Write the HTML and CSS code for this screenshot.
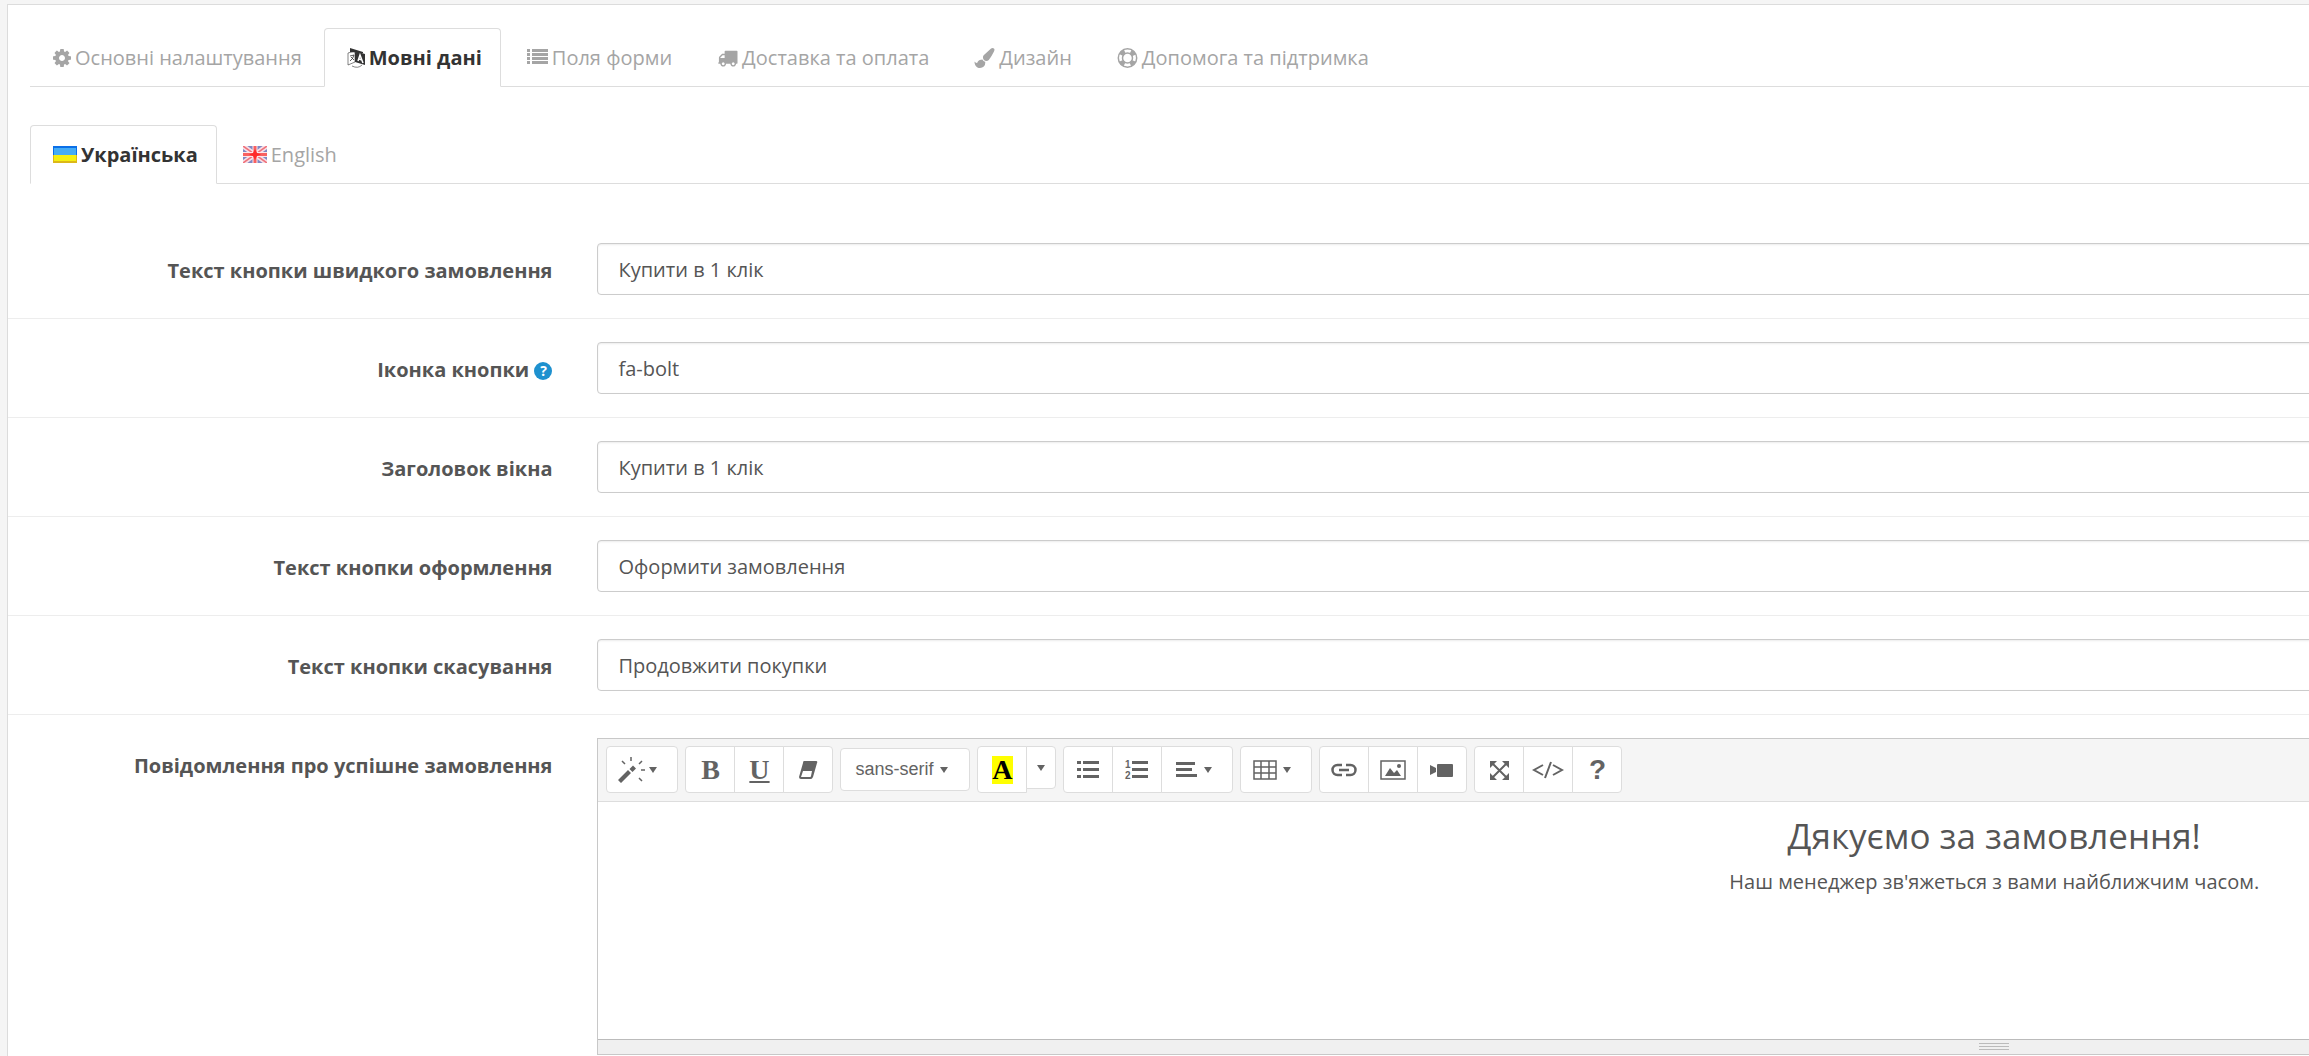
FILE: index.html
```html
<!DOCTYPE html>
<html lang="uk">
<head>
  <meta charset="UTF-8">
  <meta name="viewport" content="width=device-width, initial-scale=1.0">
  <title>Швидке замовлення</title>
  <link rel="stylesheet" href="styles.css">
</head>
<body>
  <main class="panel">
    <!-- Вкладки модуля -->
    <nav class="tabs">
      <a class="tab" href="#general">
        <svg class="icon" viewBox="128 80 1536 1632"><path d="M1152 896q0-106-75-181t-181-75-181 75-75 181 75 181 181 75 181-75 75-181zm512-109v222q0 12-8 23t-20 13l-185 28q-19 54-39 91 35 50 107 138 10 12 10 25t-9 23q-27 37-99 108t-94 71q-12 0-26-9l-138-108q-44 23-91 38-16 136-29 186-7 28-36 28h-222q-14 0-24.500-8.500t-11.500-21.500l-28-184q-49-16-90-37l-141 107q-10 9-25 9-14 0-25-11-126-114-165-168-7-10-7-23 0-12 8-23 15-21 51-66.500t54-70.500q-27-50-41-99l-183-27q-13-2-21-12.500t-8-23.500v-222q0-12 8-23t19-13l186-28q14-46 39-92-40-57-107-138-10-12-10-24 0-10 9-23 26-36 98.500-107.500t94.500-71.500q13 0 26 10l138 107q44-23 91-38 16-136 29-186 7-28 36-28h222q14 0 24.500 8.500t11.500 21.500l28 184q49 16 90 37l142-107q9-9 24-9 13 0 25 10 129 119 165 170 7 8 7 22 0 12-8 23-15 21-51 66.500t-54 70.500q26 50 41 98l183 28q13 2 21 12.500t8 23.500z"/></svg>
        Основні налаштування
      </a>
      <a class="tab active" href="#language">
        <svg class="icon" viewBox="0 0 18 20"><path d="M8 3l10 3v11L8 14zM3 0l13 4v1L3 4z"/><path d="M1 5l7-2v11l-7 3zM5 18q6 3 10-1" fill="none" stroke="currentColor" stroke-width="0.600"/><path d="M3 8l4-1q-1 4-4 6M4 9l3 3" fill="none" stroke="currentColor" stroke-width="0.800"/><path d="M11 13l2-6 3 8M12 11l3 1" fill="none" stroke="#fff" stroke-width="1.500"/></svg>
        Мовні дані
      </a>
      <a class="tab" href="#fields">
        <svg class="icon wide" viewBox="0 0 21 20"><path d="M0 1h3v3H0zM0 5h3v3H0zM0 9h3v3H0zM0 13h3v3H0zM5 1h16v3H5zM5 5h16v3H5zM5 9h16v3H5zM5 13h16v3H5z"/></svg>
        Поля форми
      </a>
      <a class="tab" href="#delivery">
        <svg class="icon wide" viewBox="0 0 1792 1792"><path d="M640 1408q0-52-38-90t-90-38-90 38-38 90 38 90 90 38 90-38 38-90zm-384-512h384v-256h-158q-13 0-22 9l-195 195q-9 9-9 22v30zm1280 512q0-52-38-90t-90-38-90 38-38 90 38 90 90 38 90-38 38-90zm256-1088v1024q0 15-4 26.500t-13.500 18.500-16.500 11.500-23.500 6-22.500 2-25.500 0-22.500-.5q0 106-75 181t-181 75-181-75-75-181h-384q0 106-75 181t-181 75-181-75-75-181h-64q-3 0-22.500.5t-25.500 0-22.500-2-23.500-6-16.500-11.500-13.500-18.500-4-26.500q0-26 19-45t45-19v-320q0-8-.5-35t0-38 2.500-34.500 6.500-37 14-30.500 22.500-30l198-198q19-19 50.500-32t58.500-13h160v-192q0-26 19-45t45-19h1024q26 0 45 19t19 45z"/></svg>
        Доставка та оплата
      </a>
      <a class="tab" href="#design">
        <svg class="icon wide" viewBox="0 0 1792 1792"><path d="M1615 0q70 0 122.500 46.500t52.500 116.500q0 63-45 151-332 629-465 752-97 91-218 91-126 0-216.500-92.500t-90.500-219.500q0-128 92-212l638-579q59-54 130-54zm-909 1034q39 76 106.500 130t150.500 76l1 71q4 213-129.500 347t-348.500 134q-123 0-218-46.500t-152.500-127.500-86.500-183-29-220q7 5 41 30t62 44.500 59 36.500 46 17q41 0 55-37 25-66 57.500-112.500t69.500-76 88-47.500 103-25.500 125-10.500z"/></svg>
        Дизайн
      </a>
      <a class="tab" href="#help">
        <svg class="icon wide" viewBox="0 0 20 20"><g fill="none" stroke="currentColor"><circle cx="10" cy="10" r="9.200" stroke-width="1.500"/><circle cx="10" cy="10" r="5" stroke-width="1.500"/><circle cx="10" cy="10" r="7" stroke-width="4.500" stroke-dasharray="5 6" stroke-dashoffset="-3"/></g></svg>
        Допомога та підтримка
      </a>
    </nav>

    <!-- Вкладки мов -->
    <nav class="tabs languages">
      <a class="tab active" href="#uk">
        <svg class="flag" viewBox="0 0 24 17"><path fill="#0a6fe8" d="M0 0h24v9H0z"/><path fill="#45acf5" d="M1 2h22v7H1z"/><path fill="#dcb818" d="M0 9h24v8H0z"/><path fill="#f5f011" d="M1 9h22v6H1z"/></svg>
        Українська
      </a>
      <a class="tab" href="#en">
        <svg class="flag" viewBox="0 0 24 17"><path fill="#8088c4" d="M0 0h24v17H0z"/><path d="M0 0l24 17M24 0L0 17" stroke="#f6dfe6" stroke-width="5"/><path d="M0 0l24 17M24 0L0 17" stroke="#f0717a" stroke-width="1.500"/><path d="M12 0v17M0 8.500h24" stroke="#fbe6ea" stroke-width="5"/><path d="M12 0v17M0 8.500h24" stroke="#f86060" stroke-width="3"/><path fill="#ff2a2a" d="M12 3l2 4 4 1.500-4 1.500-2 4-2-4-4-1.500L10 7z"/></svg>
        English
      </a>
    </nav>

    <form class="settings">
      <div class="form-group">
        <label for="buttonText">Текст кнопки швидкого замовлення</label>
        <div class="field"><input type="text" id="buttonText" value="Купити в 1 клік"></div>
      </div>
      <div class="form-group">
        <label for="buttonIcon">Іконка кнопки <span class="help">?</span></label>
        <div class="field"><input type="text" id="buttonIcon" value="fa-bolt"></div>
      </div>
      <div class="form-group">
        <label for="windowTitle">Заголовок вікна</label>
        <div class="field"><input type="text" id="windowTitle" value="Купити в 1 клік"></div>
      </div>
      <div class="form-group">
        <label for="submitText">Текст кнопки оформлення</label>
        <div class="field"><input type="text" id="submitText" value="Оформити замовлення"></div>
      </div>
      <div class="form-group">
        <label for="cancelText">Текст кнопки скасування</label>
        <div class="field"><input type="text" id="cancelText" value="Продовжити покупки"></div>
      </div>

      <!-- Редактор повідомлення -->
      <div class="form-group">
        <label id="messageLabel">Повідомлення про успішне замовлення</label>
        <div class="field">
          <div class="editor">
            <div class="toolbar">
              <div class="btn-group">
                <button type="button" class="btn-menu" aria-label="Стиль">
                  <svg class="glyph" viewBox="0 0 28 28"><path d="M1 24l10-10 3 3L4 27zM12.500 13L16 9.500l3 3-3.500 3.500z"/><path d="M14 1v4M5 5l3 3M25 5l-3 3M24 14h4M22 22l3 3" fill="none" stroke="currentColor" stroke-width="1.500"/></svg>
                  <span class="caret"></span>
                </button>
              </div>
              <div class="btn-group">
                <button type="button" class="letter">B</button>
                <button type="button" class="letter underline">U</button>
                <button type="button" aria-label="Очистити формат">
                  <svg class="glyph" viewBox="0 0 28 28"><path d="M10 5h12q2 0 1 2l-4 14q-1 2-2 2H7q-2 0-2-2l4-14q0-2 1-2zM9 15l-2 6h9q1 0 1-1l1-5z" fill-rule="evenodd"/></svg>
                </button>
              </div>
              <div class="btn-group">
                <button type="button" class="font-name">sans-serif <span class="caret"></span></button>
              </div>
              <div class="btn-group">
                <button type="button" class="letter"><span class="highlight">A</span></button>
                <button type="button" class="btn-caret" aria-label="Колір"><span class="caret"></span></button>
              </div>
              <div class="btn-group">
                <button type="button" aria-label="Маркований список">
                  <svg class="glyph" viewBox="0 0 28 28"><path d="M3 5h4v3H3zM3 12h4v3H3zM3 19h4v3H3zM9 5h16v3H9zM9 12h16v3H9zM9 19h16v3H9z"/></svg>
                </button>
                <button type="button" aria-label="Нумерований список">
                  <svg class="glyph" viewBox="0 0 28 28"><path d="M9 5h16v3H9zM9 12h16v3H9zM9 19h16v3H9z"/><text x="2" y="12">1</text><text x="2" y="23">2</text></svg>
                </button>
                <button type="button" class="btn-menu" aria-label="Вирівнювання">
                  <svg class="glyph" viewBox="0 0 28 28"><path d="M4 6h19v3H4zM4 12h16v3H4zM4 18h21v3H4z"/></svg>
                  <span class="caret"></span>
                </button>
              </div>
              <div class="btn-group">
                <button type="button" class="btn-menu" aria-label="Таблиця">
                  <svg class="glyph" viewBox="0 0 28 28"><path d="M3 5h22v18H3zM3 11h22M3 17h22M10 5v18M18 5v18" fill="none" stroke="currentColor" stroke-width="1.500"/></svg>
                  <span class="caret"></span>
                </button>
              </div>
              <div class="btn-group">
                <button type="button" aria-label="Посилання">
                  <svg class="glyph" viewBox="0 0 28 28"><path d="M12 19H7.500a5 5 0 0 1 0-10H12M16 9h4.500a5 5 0 0 1 0 10H16M9 14h10" fill="none" stroke="currentColor" stroke-width="2.500"/></svg>
                </button>
                <button type="button" aria-label="Зображення">
                  <svg class="glyph" viewBox="0 0 28 28"><path d="M2 5h24v18H2z" fill="none" stroke="currentColor" stroke-width="1.500"/><path d="M6 20l5-8 4 5 3-3 4 6z"/><circle cx="20" cy="10" r="2"/></svg>
                </button>
                <button type="button" aria-label="Відео">
                  <svg class="glyph" viewBox="0 0 28 28"><path d="M2 9l6 3v4l-6 3z"/><rect x="9" y="8" width="16" height="13" rx="1"/></svg>
                </button>
              </div>
              <div class="btn-group">
                <button type="button" aria-label="На весь екран">
                  <svg class="glyph" viewBox="0 0 28 28"><path d="M5 5h7l-7 7zM24 5h-7l7 7zM5 24h7l-7-7zM24 24h-7l7-7z"/><path d="M7 7l15 15M22 7L7 22" stroke="currentColor" stroke-width="2"/></svg>
                </button>
                <button type="button" aria-label="Код">
                  <svg class="glyph code" viewBox="0 0 32 28"><path d="M11 9l-9 5 9 5M21 9l9 5-9 5M19 6l-6 16" fill="none" stroke="currentColor" stroke-width="2"/></svg>
                </button>
                <button type="button" class="question">?</button>
              </div>
            </div>
            <div class="editable" contenteditable="true" aria-labelledby="messageLabel">
              <h2>Дякуємо за замовлення!</h2>
              <p>Наш менеджер зв'яжеться з вами найближчим часом.</p>
            </div>
            <div class="resizebar"><span></span><span></span><span></span></div>
          </div>
        </div>
      </div>
    </form>
  </main>
</body>
</html>
```
FILE: styles.css
```css
* {
  box-sizing: border-box;
}

html {
  overflow: hidden;
}

body {
  margin: 0;
  padding: 4px 0 0 7px;
  min-height: 100vh;
  display: flex;
  background-color: #f5f5f5;
  color: #555;
  font-family: "Open Sans", sans-serif;
  font-size: 20px;
  line-height: 28px;
}

/* Панель ширша за вікно, як і рядок із двох колонок усередині */
.panel {
  flex: none;
  width: 148%;
  padding-top: 23px;
  background-color: #fff;
  border: 1px solid #dcdcdc;
  border-bottom: 0;
}

/* Вкладки */
.tabs {
  display: flex;
  gap: 3px;
  margin: 0 22px;
  border-bottom: 1px solid #ddd;
}

.tab {
  display: flex;
  align-items: center;
  gap: 4px;
  height: 59px;
  margin-bottom: -1px;
  padding: 0 18px 0 22px;
  border: 1px solid transparent;
  border-radius: 4px 4px 0 0;
  color: #a5a5a5;
  text-decoration: none;
}

.tab.active {
  background-color: #fff;
  border-color: #ddd;
  border-bottom-color: #fff;
  color: #333;
  font-weight: bold;
}

.languages {
  margin-top: 38px;
}

.icon {
  width: 18px;
  height: 20px;
  fill: currentColor;
}

.icon.wide {
  width: 21px;
}

.flag {
  width: 24px;
  height: 17px;
}

/* Поля форми */
.settings {
  padding-top: 36px;
}

.form-group {
  display: grid;
  grid-template-columns: 1fr 5fr;
  padding: 23px 0;
}

.form-group + .form-group {
  border-top: 1px solid #ededed;
}

.form-group:last-child {
  padding-bottom: 0;
}

.form-group label {
  padding: 14px 23px 0;
  text-align: right;
  font-weight: bold;
}

.help {
  display: inline-block;
  width: 18px;
  height: 18px;
  border-radius: 50%;
  background-color: #1e91cf;
  color: #fff;
  font-size: 14px;
  line-height: 18px;
  text-align: center;
  vertical-align: 1px;
}

.field {
  padding: 0 22px;
}

.field input {
  display: block;
  width: 100%;
  height: 52px;
  padding: 0 20px;
  border: 1px solid #ccc;
  border-radius: 4px;
  box-shadow: inset 0 1px 2px rgba(0, 0, 0, 0.08);
  color: #555;
  font-family: inherit;
  font-size: 20px;
}

/* Редактор */
.editor {
  border: 1px solid #c8c8c8;
}

.toolbar {
  display: flex;
  align-items: flex-start;
  gap: 7px;
  padding: 7px 8px 8px;
  background-color: #f5f5f5;
  border-bottom: 1px solid #ddd;
}

.btn-group {
  display: flex;
  align-items: flex-start;
}

.btn-group button {
  display: flex;
  align-items: center;
  justify-content: center;
  gap: 4px;
  width: 50px;
  height: 47px;
  padding: 0;
  background-color: #fff;
  border: 1px solid #ddd;
  color: #636363;
}

.btn-group button + button {
  margin-left: -1px;
}

.btn-group button:first-child {
  border-top-left-radius: 4px;
  border-bottom-left-radius: 4px;
}

.btn-group button:last-child {
  border-top-right-radius: 4px;
  border-bottom-right-radius: 4px;
}

.btn-group .btn-menu {
  justify-content: flex-start;
  width: 72px;
  padding-left: 10px;
}

.btn-group .letter {
  font-family: "Liberation Serif", serif;
  font-size: 28px;
  font-weight: bold;
}

.btn-group .underline {
  text-decoration: underline;
}

.btn-group .font-name {
  justify-content: flex-start;
  gap: 6px;
  width: 130px;
  height: 43px;
  margin-top: 2px;
  padding-left: 14px;
  font-family: "Liberation Sans", sans-serif;
  font-size: 18px;
}

.btn-group .btn-caret {
  width: 30px;
  height: 43px;
}

.btn-group .question {
  font-family: "Liberation Sans", sans-serif;
  font-size: 28px;
  font-weight: bold;
}

.highlight {
  width: 21px;
  background-color: #ff0;
  color: #000;
  line-height: 28px;
}

.glyph {
  width: 28px;
  height: 28px;
  fill: currentColor;
}

.glyph.code {
  width: 32px;
}

.glyph text {
  font: bold 10px "Liberation Sans", sans-serif;
}

.caret {
  border: 4px solid transparent;
  border-top: 6px solid #636363;
  border-bottom: 0;
}

.editable {
  height: 237px;
  padding: 14px;
  text-align: center;
  outline: none;
}

.editable h2 {
  margin: 0 0 12px;
  font-size: 35px;
  font-weight: normal;
  line-height: 40px;
}

.editable p {
  margin: 0;
}

.resizebar {
  display: flex;
  flex-direction: column;
  align-items: center;
  gap: 2px;
  height: 15px;
  padding-top: 3px;
  background-color: #f0f0f0;
  border-top: 1px solid #bbb;
}

.resizebar span {
  width: 30px;
  height: 1px;
  background-color: #bbb;
}
```
